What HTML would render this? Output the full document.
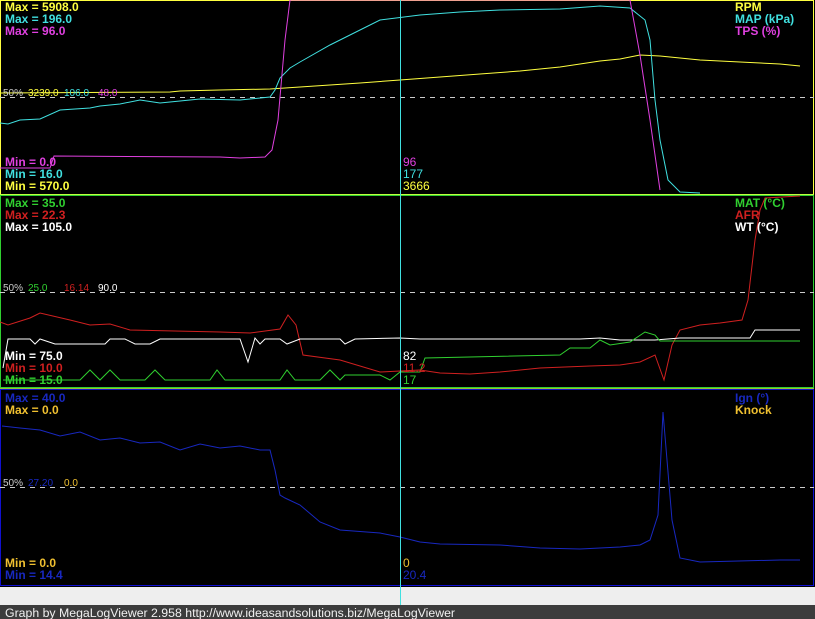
<!DOCTYPE html>
<html><head><style>
html,body{margin:0;padding:0;width:815px;height:619px;overflow:hidden;background:#eeeeee}
svg{display:block}
text{font-family:"Liberation Sans",Arial,sans-serif;font-size:12px}
.b{font-weight:bold}
</style></head><body>
<svg width="815" height="619" viewBox="0 0 815 619">
<rect x="0" y="0" width="815" height="587" fill="#000"/>
<rect x="0" y="605" width="815" height="14" fill="#3c3c3c"/>
<text x="5" y="617" fill="#f0f0f0" style="font-size:12.3px">Graph by MegaLogViewer 2.958 http://www.ideasandsolutions.biz/MegaLogViewer</text>

<rect x="0.5" y="0.5" width="813" height="194" fill="none" stroke="#ffff40"/>
<rect x="0.5" y="195.5" width="813" height="192" fill="none" stroke="#30d030"/>
<line x1="0" y1="194.5" x2="814" y2="194.5" stroke="#c0ff40"/>
<rect x="0.5" y="389.5" width="813" height="196" fill="none" stroke="#1010d0"/>
<line x1="0" y1="388.5" x2="814" y2="388.5" stroke="#a0c030"/>

<line x1="0" y1="97.5" x2="814" y2="97.5" stroke="#ccc" stroke-dasharray="5,5"/>
<line x1="0" y1="292.5" x2="814" y2="292.5" stroke="#ccc" stroke-dasharray="5,5"/>
<line x1="0" y1="487.5" x2="814" y2="487.5" stroke="#ccc" stroke-dasharray="5,5"/>

<polyline fill="none" stroke="#ffff40" points="0,93 170,92 180,91 220,90 270,89 300,87 360,83 400,80 440,77 480,74 520,71 560,67 600,61 620,59 635,56 640,55 660,56 700,60 740,62 780,64 800,66"/>
<polyline fill="none" stroke="#40e0e0" points="0,123 8,124 20,120 40,119 60,110 90,108 100,106 120,104 140,100 160,103 180,101 200,99 240,100 270,97 275,90 280,78 290,68 300,62 330,45 360,30 380,20 420,15 460,12 500,10 560,9 600,6 630,8 645,20 650,40 655,100 660,140 668,180 680,192 700,193"/>
<polyline fill="none" stroke="#e040e0" points="0,168 50,168 54,156 220,157 240,158 265,157 272,150 278,120 285,40 290,0 630,0 640,55 650,120 660,190"/>

<polyline fill="none" stroke="#d02020" points="0,322 8,325 30,318 40,313 70,320 90,325 110,324 130,330 220,332 250,333 280,329 288,315 296,325 303,355 340,360 380,372 400,371 420,370 440,373 470,374 500,372 540,368 590,366 620,365 640,362 655,355 664,380 672,345 680,330 700,325 720,323 742,320 748,300 755,240 760,210 765,198 800,196"/>
<polyline fill="none" stroke="#ffffff" points="3,368 8,339 30,339 35,344 40,339 55,344 105,344 110,339 125,339 135,344 150,344 160,339 240,339 248,362 255,338 260,344 265,339 280,339 287,344 300,339 340,339 345,344 355,339 400,338 420,339 580,339 600,338 620,340 640,340 655,340 680,338 700,338 720,338 750,338 755,330 800,330"/>
<polyline fill="none" stroke="#30d030" points="3,380 80,380 90,370 100,380 110,370 120,380 145,380 155,370 165,380 210,380 217,370 225,380 280,380 287,370 295,380 320,380 330,370 340,380 345,375 380,375 390,380 400,372 420,372 425,358 560,355 570,348 590,348 600,340 610,345 630,342 645,332 655,335 660,341 680,341 800,341"/>

<polyline fill="none" stroke="#1828c0" points="2,426 20,428 40,430 60,436 80,432 100,440 120,438 140,443 160,442 180,450 200,444 220,448 240,446 260,450 270,450 275,470 280,495 285,498 300,505 320,522 340,530 380,533 400,537 420,542 440,544 500,545 540,548 580,549 620,547 640,545 650,540 658,515 663,412 667,460 672,520 680,558 700,562 780,560 800,560"/>

<line x1="400.5" y1="0" x2="400.5" y2="605" stroke="#40e0e0"/>

<text class="b" x="5" y="11" fill="#ffff40">Max = 5908.0</text>
<text class="b" x="5" y="23" fill="#40e0e0">Max = 196.0</text>
<text class="b" x="5" y="35" fill="#e040e0">Max = 96.0</text>
<text class="b" x="735" y="11" fill="#ffff40">RPM</text>
<text class="b" x="735" y="23" fill="#40e0e0">MAP (kPa)</text>
<text class="b" x="735" y="35" fill="#e040e0">TPS (%)</text>
<text x="3" y="96" fill="#ccc" style="font-size:10px">50%</text>
<text x="28" y="96" fill="#ffff40" style="font-size:10px">3239.0</text>
<text x="64" y="96" fill="#40e0e0" style="font-size:10px">106.0</text>
<text x="98" y="96" fill="#e040e0" style="font-size:10px">48.0</text>
<text class="b" x="5" y="166" fill="#e040e0">Min = 0.0</text>
<text class="b" x="5" y="178" fill="#40e0e0">Min = 16.0</text>
<text class="b" x="5" y="190" fill="#ffff40">Min = 570.0</text>
<text x="403" y="166" fill="#e040e0">96</text>
<text x="403" y="178" fill="#40e0e0">177</text>
<text x="403" y="190" fill="#ffff40">3666</text>

<text class="b" x="5" y="207" fill="#30d030">Max = 35.0</text>
<text class="b" x="5" y="219" fill="#d02020">Max = 22.3</text>
<text class="b" x="5" y="231" fill="#fff">Max = 105.0</text>
<text class="b" x="735" y="207" fill="#30d030">MAT (°C)</text>
<text class="b" x="735" y="219" fill="#d02020">AFR</text>
<text class="b" x="735" y="231" fill="#fff">WT (°C)</text>
<text x="3" y="291" fill="#ccc" style="font-size:10px">50%</text>
<text x="28" y="291" fill="#30d030" style="font-size:10px">25.0</text>
<text x="64" y="291" fill="#d02020" style="font-size:10px">16.14</text>
<text x="98" y="291" fill="#fff" style="font-size:10px">90.0</text>
<text class="b" x="5" y="360" fill="#fff">Min = 75.0</text>
<text class="b" x="5" y="372" fill="#d02020">Min = 10.0</text>
<text class="b" x="5" y="384" fill="#30d030">Min = 15.0</text>
<text x="403" y="360" fill="#fff">82</text>
<text x="403" y="372" fill="#d02020">11.2</text>
<text x="403" y="384" fill="#30d030">17</text>

<text class="b" x="5" y="402" fill="#1828c0">Max = 40.0</text>
<text class="b" x="5" y="414" fill="#f0c030">Max = 0.0</text>
<text class="b" x="735" y="402" fill="#1828c0">Ign (°)</text>
<text class="b" x="735" y="414" fill="#f0c030">Knock</text>
<text x="3" y="486" fill="#ccc" style="font-size:10px">50%</text>
<text x="28" y="486" fill="#1828c0" style="font-size:10px">27.20</text>
<text x="64" y="486" fill="#f0c030" style="font-size:10px">0.0</text>
<text class="b" x="5" y="567" fill="#f0c030">Min = 0.0</text>
<text class="b" x="5" y="579" fill="#1828c0">Min = 14.4</text>
<text x="403" y="567" fill="#f0c030">0</text>
<text x="403" y="579" fill="#1828c0">20.4</text>
</svg>
</body></html>
